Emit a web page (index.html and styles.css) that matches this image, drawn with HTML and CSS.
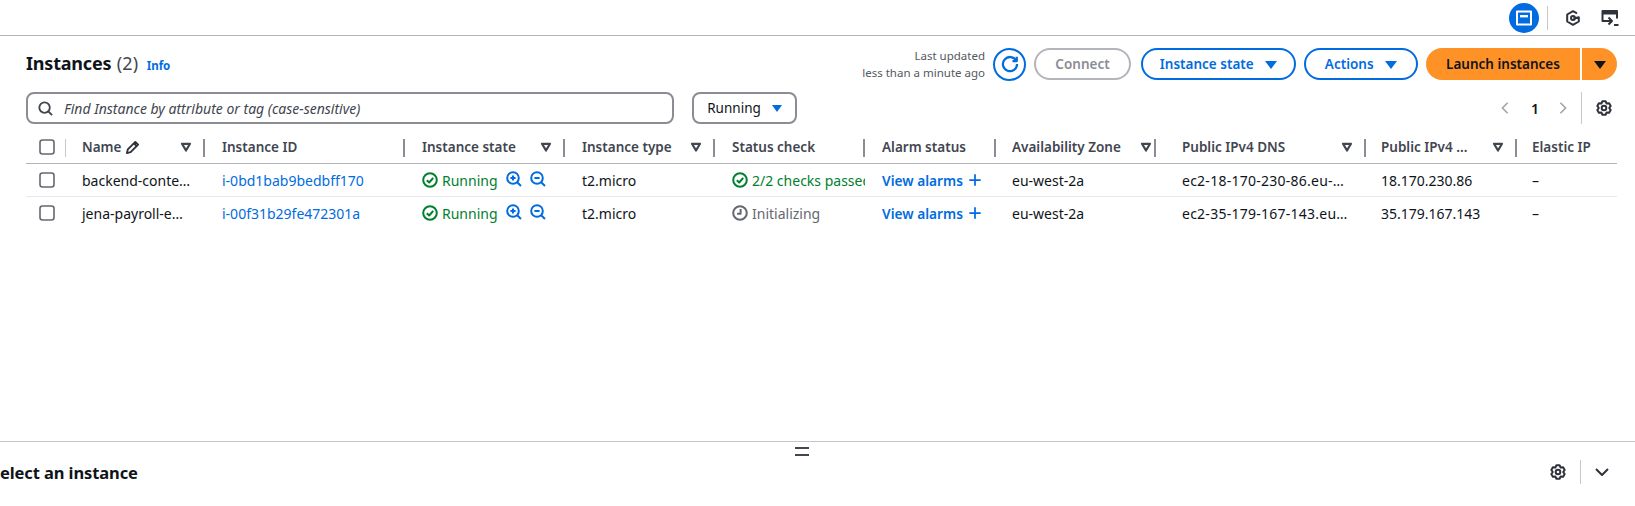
FILE: index.html
```html
<!DOCTYPE html>
<html lang="en">
<head>
    <meta charset="UTF-8">
    <meta name="viewport" content="width=device-width, initial-scale=1.0">
    <title>Instances</title>
    <link rel="stylesheet" href="styles.css">
</head>
<body>

<svg class="sprites" width="0" height="0">
    <symbol id="i-gear" viewBox="0 0 16 16">
        <path d="M6.43 1.18H9.57L10.6 3.5L13.12 3.23L14.69 5.95L13.2 8L14.69 10.05L13.12 12.77L10.6 12.5L9.57 14.82H6.43L5.4 12.5L2.88 12.77L1.31 10.05L2.8 8L1.31 5.95L2.88 3.23L5.4 3.5Z"/>
        <circle cx="8" cy="8" r="2.3"/>
    </symbol>
    <symbol id="i-ok" viewBox="0 0 16 16">
        <circle cx="8" cy="8" r="6.8"/>
        <path d="M4.8 8.2L7.2 10.5L11.2 5.8"/>
    </symbol>
    <symbol id="i-clock" viewBox="0 0 16 16">
        <circle cx="8" cy="8" r="6.8"/>
        <path d="M8.6 4V8.8H5"/>
    </symbol>
    <symbol id="i-zoomin" viewBox="0 0 16 16">
        <circle cx="7" cy="7" r="5.8"/>
        <path d="M11.2 11.2L15 15M7 4.4V9.6M4.4 7H9.6"/>
    </symbol>
    <symbol id="i-zoomout" viewBox="0 0 16 16">
        <circle cx="7" cy="7" r="5.8"/>
        <path d="M11.2 11.2L15 15M4.4 7H9.6"/>
    </symbol>
    <symbol id="i-plus" viewBox="0 0 16 16">
        <path d="M8 1.5V14.5M1.5 8H14.5"/>
    </symbol>
    <symbol id="i-sort" viewBox="0 0 12 12">
        <path d="M2 2.8H10L6 9.5Z"/>
    </symbol>
    <symbol id="i-check" viewBox="0 0 16 16">
        <rect x="1" y="1" width="14" height="14" rx="2.5"/>
    </symbol>
</svg>

<div class="topbar">
    <span class="panel-btn">
        <svg class="ico" width="16" height="16" viewBox="0 0 16 16"><path d="M1 1.5H15V14.5H1Z"/><path d="M4 6.2H12" stroke-width="2.4"/></svg>
    </span>
    <span class="vline topbar-line"></span>
    <svg class="ico dark hex" width="16" height="16" viewBox="0 0 16 16"><path d="M12 3.4L8 1.2L2.2 4.5V11.5L8 14.8L13.8 11.5V7.2L8.4 8.4"/><circle cx="8" cy="8" r="2"/></svg>
    <svg class="ico dark term" width="18" height="18" viewBox="0 0 18 18"><path d="M7 12H1.5V2H16V9.5"/><path d="M1.5 4H16" stroke-width="3"/><path d="M7.5 8.5L11 12L7.5 15.5M4 12H10.5"/><path d="M13 16H17.5"/></svg>
</div>

<main class="content">
    <div class="head-row">
        <h1>Instances <span class="count">(2)</span> <a class="info">Info</a></h1>
        <div class="actions">
            <div class="updated">Last updated<br>less than a minute ago</div>
            <span class="refresh">
                <svg class="ico" width="18" height="18" viewBox="0 0 16 16"><path d="M13.6 5.2A6.3 6.3 0 1 0 14.3 8"/><path d="M14 1.6V5.4H10.2"/></svg>
            </span>
            <button class="btn disabled">Connect</button>
            <button class="btn state">Instance state <i class="caret"></i></button>
            <button class="btn acts">Actions <i class="caret"></i></button>
            <div class="launch">
                <button class="launch-main">Launch instances</button>
                <button class="launch-drop"><i class="caret black"></i></button>
            </div>
        </div>
    </div>

    <div class="filter-row">
        <div class="search">
            <svg class="ico grey" width="15" height="15" viewBox="0 0 16 16"><circle cx="7" cy="7" r="5.6"/><path d="M11 11L15 15"/></svg>
            <span>Find Instance by attribute or tag (case-sensitive)</span>
        </div>
        <div class="filter">Running <i class="caret small"></i></div>
        <div class="pager">
            <svg class="ico faint" width="14" height="14" viewBox="0 0 16 16"><path d="M11 2L5 8L11 14"/></svg>
            <b>1</b>
            <svg class="ico faint" width="14" height="14" viewBox="0 0 16 16"><path d="M5 2L11 8L5 14"/></svg>
            <span class="vline pager-line"></span>
            <svg class="ico dark" width="16" height="16"><use href="#i-gear"/></svg>
        </div>
    </div>

    <div class="table">
        <div class="row th">
            <div class="c first"><svg class="check" width="16" height="16"><use href="#i-check"/></svg></div>
            <div class="c name sortable"><span class="name-h">Name <svg class="ico dark" width="15" height="15" viewBox="0 0 16 16"><path d="M2 14L3 10L11 2L14 5L6 13Z"/><path d="M9.5 3.5L12.5 6.5"/></svg></span><svg class="sort"><use href="#i-sort"/></svg></div>
            <div class="c">Instance ID</div>
            <div class="c sortable">Instance state<svg class="sort"><use href="#i-sort"/></svg></div>
            <div class="c sortable">Instance type<svg class="sort"><use href="#i-sort"/></svg></div>
            <div class="c">Status check</div>
            <div class="c">Alarm status</div>
            <div class="c sortable az">Availability Zone<svg class="sort"><use href="#i-sort"/></svg></div>
            <div class="c sortable dns">Public IPv4 DNS<svg class="sort"><use href="#i-sort"/></svg></div>
            <div class="c sortable ipv4">Public IPv4 ...<svg class="sort"><use href="#i-sort"/></svg></div>
            <div class="c last">Elastic IP</div>
        </div>

        <div class="row td">
            <div class="c first"><svg class="check" width="16" height="16"><use href="#i-check"/></svg></div>
            <div class="c name">backend-conte…</div>
            <div class="c"><a>i-0bd1bab9bedbff170</a></div>
            <div class="c"><span class="status green"><svg class="ico" width="16" height="16"><use href="#i-ok"/></svg>Running</span><span class="zooms"><svg class="ico blue" width="16" height="16"><use href="#i-zoomin"/></svg><svg class="ico blue" width="16" height="16"><use href="#i-zoomout"/></svg></span></div>
            <div class="c">t2.micro</div>
            <div class="c"><span class="status green"><svg class="ico" width="16" height="16"><use href="#i-ok"/></svg>2/2 checks passed</span></div>
            <div class="c"><a class="alarms">View alarms <svg class="ico blue" width="14" height="14"><use href="#i-plus"/></svg></a></div>
            <div class="c az">eu-west-2a</div>
            <div class="c dns">ec2-18-170-230-86.eu-…</div>
            <div class="c ipv4">18.170.230.86</div>
            <div class="c last">–</div>
        </div>

        <div class="row td end">
            <div class="c first"><svg class="check" width="16" height="16"><use href="#i-check"/></svg></div>
            <div class="c name">jena-payroll-e…</div>
            <div class="c"><a>i-00f31b29fe472301a</a></div>
            <div class="c"><span class="status green"><svg class="ico" width="16" height="16"><use href="#i-ok"/></svg>Running</span><span class="zooms"><svg class="ico blue" width="16" height="16"><use href="#i-zoomin"/></svg><svg class="ico blue" width="16" height="16"><use href="#i-zoomout"/></svg></span></div>
            <div class="c">t2.micro</div>
            <div class="c"><span class="status muted"><svg class="ico" width="16" height="16"><use href="#i-clock"/></svg>Initializing</span></div>
            <div class="c"><a class="alarms">View alarms <svg class="ico blue" width="14" height="14"><use href="#i-plus"/></svg></a></div>
            <div class="c az">eu-west-2a</div>
            <div class="c dns">ec2-35-179-167-143.eu…</div>
            <div class="c ipv4">35.179.167.143</div>
            <div class="c last">–</div>
        </div>
    </div>
</main>

<section class="split">
    <div class="handle"></div>
    <div class="split-row">
        <h2>Select an instance</h2>
        <div class="split-tools">
            <svg class="ico dark" width="16" height="16"><use href="#i-gear"/></svg>
            <span class="vline split-line"></span>
            <svg class="ico dark" width="16" height="16" viewBox="0 0 16 16"><path d="M2 5L8 11L14 5"/></svg>
        </div>
    </div>
</section>

</body>
</html>
```

FILE: styles.css
```css
html, body {
    margin: 0;
    height: 506px;
    overflow: hidden;
}
body {
    font-family: "Noto Sans", Arial, sans-serif;
    font-size: 14px;
    color: #0f141a;
    background-color: white;
    display: flex;
    flex-direction: column;
}
.sprites {
    display: block;
    height: 0;
}

/* icons */
.ico {
    fill: none;
    stroke: currentColor;
    stroke-width: 2;
    stroke-linejoin: round;
    flex: none;
}
.ico.dark { color: #2e323a; }
.ico.grey { color: #424650; }
.ico.faint { color: #a4a4ad; }
.ico.blue { color: #006ce0; }
.check {
    fill: none;
    stroke: #656871;
    stroke-width: 1.6;
}
.sort {
    width: 12px;
    height: 12px;
    fill: none;
    stroke: #424650;
    stroke-width: 2.2;
    stroke-linejoin: round;
    flex: none;
}
.caret {
    display: inline-block;
    width: 0;
    height: 0;
    border-left: 6px solid transparent;
    border-right: 6px solid transparent;
    border-top: 8px solid #006ce0;
    margin-left: 8px;
}
.caret.small {
    border-left-width: 5px;
    border-right-width: 5px;
    border-top-width: 7px;
}
.caret.black { border-top-color: #0f141a; margin: 0; }
.vline {
    display: block;
    width: 1px;
    background-color: #c6c6cd;
}

/* top bar */
.topbar {
    height: 35px;
    border-bottom: 1px solid #b4b4bb;
    display: flex;
    align-items: center;
    justify-content: flex-end;
    padding-right: 16px;
    flex: none;
}
.panel-btn {
    width: 30px;
    height: 30px;
    border-radius: 50%;
    background-color: #006ce0;
    color: white;
    display: flex;
    align-items: center;
    justify-content: center;
}
.topbar-line { height: 24px; margin-left: 8px; }
.hex { margin-left: 17px; }
.term { margin-left: 20px; }

/* main */
.content {
    flex: 1;
    padding: 12px 18px 0 26px;
}
.head-row {
    display: flex;
    justify-content: space-between;
    align-items: center;
    height: 32px;
}
h1 {
    font-size: 18px;
    font-weight: 700;
    margin: -2px 0 0;
    letter-spacing: -0.2px;
}
.count { font-weight: 400; color: #424650; margin-left: 1px; letter-spacing: 0.1px; }
.info {
    font-size: 11.5px;
    font-weight: 700;
    color: #006ce0;
    margin-left: 4px;
    letter-spacing: 0;
}
.actions {
    display: flex;
    align-items: center;
}
.updated {
    font-size: 11.5px;
    line-height: 17px;
    color: #545860;
    text-align: right;
    margin-right: 8px;
}
.refresh {
    width: 29px;
    height: 29px;
    border: 2px solid #006ce0;
    border-radius: 50%;
    color: #006ce0;
    display: flex;
    align-items: center;
    justify-content: center;
    margin-right: 8px;
}
.btn {
    font-family: inherit;
    font-size: 13.5px;
    font-weight: 600;
    height: 32px;
    border: 2px solid #006ce0;
    border-radius: 16px;
    background-color: white;
    color: #006ce0;
    padding: 0;
    margin-right: 8px;
}
.btn.disabled { width: 97px; border-color: #b4b4bb; color: #8c8c94; margin-right: 10px; }
.btn.state { width: 155px; }
.btn.acts { width: 114px; }
.launch { display: flex; }
.launch-main, .launch-drop {
    font-family: inherit;
    font-size: 13.5px;
    font-weight: 600;
    height: 32px;
    border: none;
    background-color: #ff9227;
    color: #0f141a;
    padding: 0;
}
.launch-main { width: 154px; border-radius: 16px 0 0 16px; }
.launch-drop { width: 35px; margin-left: 2px; border-radius: 0 16px 16px 0; }

/* filter */
.filter-row {
    display: flex;
    align-items: center;
    height: 32px;
    margin-top: 12px;
}
.search {
    width: 648px;
    height: 32px;
    box-sizing: border-box;
    border: 2px solid #8c8c94;
    border-radius: 8px;
    display: flex;
    align-items: center;
    gap: 11px;
    padding-left: 10px;
    font-style: italic;
    font-size: 14px;
    color: #424650;
}
.filter {
    margin-left: 18px;
    width: 105px;
    height: 32px;
    box-sizing: border-box;
    border: 2px solid #8c8c94;
    border-radius: 8px;
    display: flex;
    align-items: center;
    justify-content: center;
    font-size: 13.5px;
}
.filter .caret { margin-left: 11px; }
.pager {
    margin-left: auto;
    margin-right: 5px;
    display: flex;
    align-items: center;
    font-size: 14px;
}
.pager b { margin: 0 17px 0 19px; font-weight: 600; }
.pager-line { height: 32px; margin: 0 14px 0 11px; }

/* table */
.table {
    margin-top: 7px;
}
.row {
    display: grid;
    grid-template-columns: 40px 139px 200px 160px 150px 150px 131px 160px 210px 151px 100px;
}
.c {
    padding-left: 17px;
    padding-right: 13px;
    display: flex;
    align-items: center;
    overflow: hidden;
    white-space: nowrap;
    box-sizing: border-box;
}
.c.first { padding: 0 0 0 13px; }
.c.name { padding-left: 16px; }
.c.dns { padding-left: 26px; }
.c.az { padding-right: 4px; padding-left: 16px; }
.c.ipv4 { padding-left: 15px; }
.c.last { padding-right: 0; padding-left: 15px; }
.th {
    height: 32px;
    border-bottom: 1px solid #b4b4bb;
    font-weight: 600;
    font-size: 13.5px;
    color: #424650;
}
.th .c { position: relative; }
.th .c::after {
    content: "";
    position: absolute;
    right: 0;
    top: 8px;
    height: 18px;
    width: 2px;
    background-color: #8c8c94;
}
.th .c.last::after { display: none; }
.th .c.first::after { width: 1px; background-color: #c6c6cd; }
.sortable { justify-content: space-between; }
.name-h { display: flex; align-items: center; gap: 4px; }
.td {
    height: 32px;
    border-bottom: 1px solid #e8e8ec;
}
.td.end { border-bottom: none; }
.td .c { padding-right: 0; }
.td .c.dns { letter-spacing: 0.25px; }
a { color: #006ce0; }
.status {
    display: flex;
    align-items: center;
    gap: 4px;
}
.green { color: #00802f; }
.muted { color: #656871; }
.zooms {
    display: flex;
    gap: 8px;
    margin: -2px 0 0 8px;
}
.alarms {
    font-weight: 600;
    display: flex;
    align-items: center;
    gap: 5px;
    font-size: 13.7px;
}

/* bottom panel */
.split {
    flex: none;
    height: 64px;
    border-top: 1px solid #c6c6cd;
    position: relative;
}
.handle {
    position: absolute;
    left: 795px;
    top: 5px;
    width: 14px;
    height: 5px;
    border-top: 2px solid #424650;
    border-bottom: 2px solid #424650;
}
.split-row {
    display: flex;
    align-items: center;
    justify-content: space-between;
    height: 60px;
    padding-right: 25px;
}
h2 {
    font-size: 16.5px;
    font-weight: 700;
    margin: 0 0 0 -9px;
    letter-spacing: -0.1px;
}
.split-tools {
    display: flex;
    align-items: center;
}
.split-line { height: 24px; margin: 0 13px 0 14px; }
```
